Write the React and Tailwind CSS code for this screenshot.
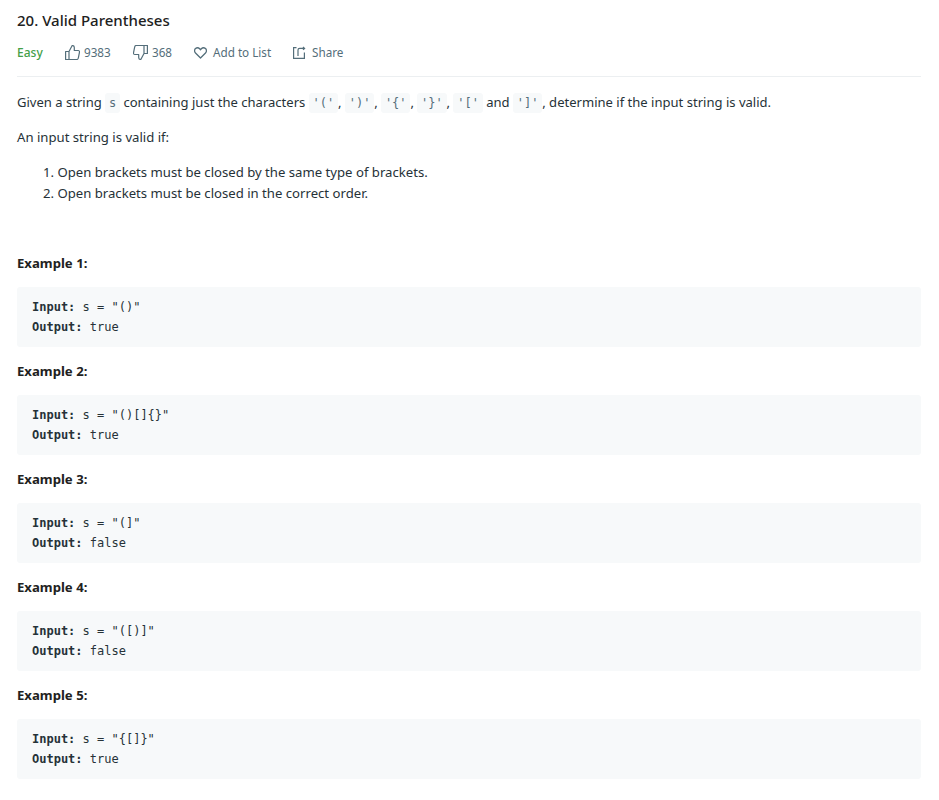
import React from 'react';

const examples = [
  { s: '"()"', out: 'true' },
  { s: '"()[]{}"', out: 'true' },
  { s: '"(]"', out: 'false' },
  { s: '"([)]"', out: 'false' },
  { s: '"{[]}"', out: 'true' },
];

const Code = ({ children }) => (
  <code className="bg-[#f7f9fa] rounded-[3px] px-[3.8px] py-[3px] font-['DejaVu_Sans_Mono',monospace] text-[12px] text-[#546e7a]">
    {children}
  </code>
);

const ThumbUp = () => (
  <svg width="15" height="15" viewBox="0 0 15 15" fill="none" stroke="#546e7a" strokeWidth="1.2" strokeLinejoin="round">
    <path d="M.6 6.500h3.400v8H.6zM4 6.500l3.200-6c1.300 0 2.100.9 2.100 2.100V5.500h3.900c.9 0 1.500.8 1.300 1.600l-1.200 6.100c-.2.800-.8 1.300-1.600 1.300H4" />
  </svg>
);

const ThumbDown = () => (
  <svg width="15" height="15" viewBox="0 0 15 15" fill="none" stroke="#546e7a" strokeWidth="1.2" strokeLinejoin="round">
    <path d="M14.400 8.500H11v-8h3.400zM11 8.500l-3.200 6c-1.300 0-2.100-.9-2.100-2.100V9.500H1.800C.9 9.500.3 8.700.5 7.900l1.200-6.100C1.900 1 2.500.5 3.300.5H11" />
  </svg>
);

const Heart = () => (
  <svg width="13" height="12" viewBox="0 0 13 12" fill="none" stroke="#546e7a" strokeWidth="1.300" strokeLinejoin="round">
    <path d="M6.500 11 1.500 6C.2 4.700.3 2.700 1.500 1.600 2.800.5 4.600.7 5.700 1.800l.8.900.8-.9C8.400.7 10.200.5 11.500 1.600c1.200 1.100 1.300 3.100 0 4.400z" />
  </svg>
);

const Share = () => (
  <svg width="13" height="13" viewBox="0 0 13 13" fill="none" stroke="#546e7a" strokeWidth="1.200">
    <path d="M3.500 1.600H.6v10.800h10.800V6.500M5 10V4c0-1 .6-1.600 1.600-1.600h4.900M10 1l1.600 1.400L10 3.800" />
  </svg>
);

export default function App() {
  return (
    <div className="bg-white min-h-[800px] pl-[17px] pr-[18px] pt-[9px] font-['Noto_Sans',sans-serif] text-[13.15px] text-[#263238]">
      <div className="text-[15px] font-medium leading-[22px] text-[#212121]">20. Valid Parentheses</div>
      <div className="flex items-center mt-[12px] h-[20px] text-[11.7px] text-[#546e7a]">
        <span className="text-[#43a047] text-[12px] font-medium w-[48px]">Easy</span>
        <span className="flex items-center gap-[4px] w-[68px]"><ThumbUp />9383</span>
        <span className="flex items-center gap-[4px] w-[61px]"><ThumbDown />368</span>
        <span className="flex items-center gap-[6px] w-[99px]"><Heart />Add to List</span>
        <span className="flex items-center gap-[6px]"><Share />Share</span>
      </div>
      <div className="border-b border-[#eceff1] mt-[13px]" />
      <div className="mt-[13px] leading-[24px] whitespace-nowrap text-[13.05px]">
        Given a string <Code>s</Code> containing just the characters <Code>'('</Code>, <Code>')'</Code>, <Code>'{'{'}'</Code>, <Code>'{'}'}'</Code>, <Code>'['</Code> and <Code>']'</Code>, determine if the input string is valid.
      </div>
      <p className="mt-[10px] leading-[24px]">An input string is valid if:</p>
      <ol className="mt-[13px] pl-[40px] leading-[21px] list-none">
        <li className="-indent-[14px]">1. Open brackets must be closed by the same type of brackets.</li>
        <li className="-indent-[14px]">2. Open brackets must be closed in the correct order.</li>
      </ol>
      <div className="mt-[47px]">
        {examples.map((ex, i) => (
          <div key={i} className="mt-[12px] first:mt-[0px]">
            <div className="font-bold leading-[24px] text-[#212121]">Example {i + 1}:</div>
            <pre className="mt-[12px] bg-[#f7f9fa] rounded-[3px] h-[60px] px-[15px] py-[10px] font-['DejaVu_Sans_Mono',monospace] text-[12px] leading-[20px] text-[#263238]">
              <div><b className="font-bold">Input:</b> s = {ex.s}</div>
              <div><b className="font-bold">Output:</b> {ex.out}</div>
            </pre>
          </div>
        ))}
      </div>
    </div>
  );
}
